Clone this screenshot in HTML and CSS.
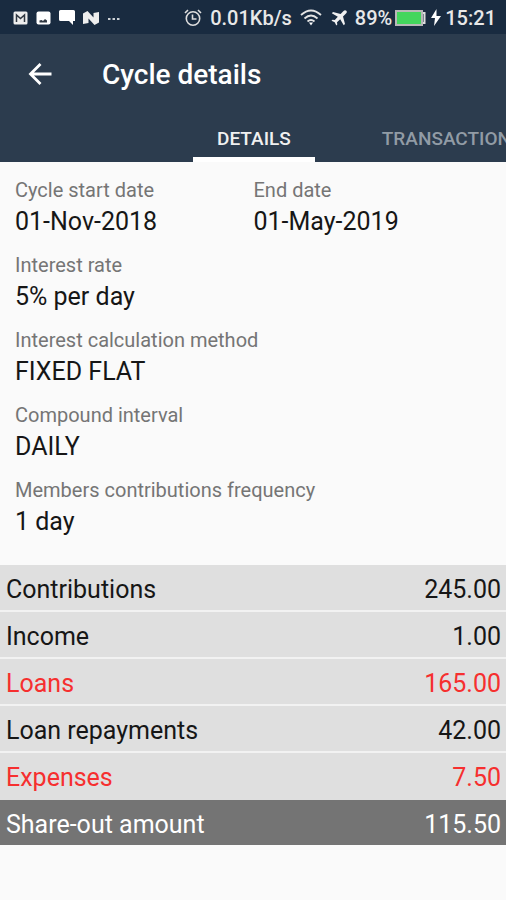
FILE: index.html
```html
<!DOCTYPE html>
<html lang="en">
<head>
<meta charset="utf-8">
<meta name="viewport" content="width=device-width, initial-scale=1">
<title>Cycle details</title>
<link rel="stylesheet" href="styles.css">
</head>
<body>
<div class="status">
  <div class="notices">
    <svg width="15" height="14" viewBox="0 0 15 14" aria-hidden="true"><rect x=".5" y=".5" width="14" height="13" rx="1.5" fill="#eee"/><path d="M3.500 11V4l4 3.500 4-3.500v7" fill="none" stroke="#303842" stroke-width="1.500"/></svg>
    <svg width="15" height="14" viewBox="0 0 15 14" aria-hidden="true"><rect x=".5" y=".5" width="14" height="13" rx="2" fill="#fff"/><path d="M3.500 11.500V9.500l2-.5 1.500 1 2-2 2 1.500v2z" fill="#303842"/></svg>
    <svg width="16" height="15" viewBox="0 0 16 15" aria-hidden="true"><path d="M1.500 0h13Q16 0 16 1.500V11h-2v4l-4-4H1.500Q0 11 0 9.500v-8Q0 0 1.500 0z" fill="#fff"/></svg>
    <svg width="16" height="14" viewBox="0 0 16 14" aria-hidden="true"><path d="M0 2.500L4.500 0l6 6.500V2L16 1v10.500L11.500 14l-6-6.500V12L0 13z" fill="#eee"/></svg>
    <svg width="14" height="14" viewBox="0 0 14 14" aria-hidden="true"><path d="M1 8h2.500M5.500 8H8M10 8h2.500" stroke="#ccd1d6" stroke-width="2"/></svg>
  </div>
  <div class="system">
    <svg class="alarm" width="18" height="18" viewBox="0 0 18 18" fill="none" stroke="#dedede" stroke-width="1.600" aria-hidden="true"><circle cx="9" cy="9.500" r="6.700"/><path d="M8.500 5.500v4.500h4M1 4l3-3M17 4l-3-3"/></svg>
    <span class="rate">0.01Kb/s</span>
    <svg class="wifi" width="22" height="17" viewBox="0 0 22 17" fill="none" stroke="#e4e4e4" stroke-width="1.800" aria-hidden="true"><path d="M1 6q10-9 20 0M4.500 9.500q6.500-6 13 0M7.500 12.500q3.500-3 7 0"/><path d="M9 13.500h4l-2 3z" fill="#fff" stroke="none"/></svg>
    <svg class="plane" width="16" height="16" viewBox="0 0 16 16" aria-hidden="true"><path d="M15.300.7q-1.300-1.200-2.800.3L9.600 4 2 2 .8 3.300l6 3.500-3 3.200-2.300-.3-1 1L3.700 12.300l1.600 3.200 1-1L6 12.200l3.200-3 3.500 6L14 14 12 6.400l3-2.900q1.500-1.500.3-2.800z" fill="#f0f0f0"/></svg>
    <span>89%</span>
    <svg class="battery" width="31" height="16" viewBox="0 0 31 16" aria-hidden="true"><rect x="1" y="1" width="26" height="14" fill="#43d65d" stroke="#b8b8b8" stroke-width="2"/><path d="M28 3h1.500v10H28" fill="none" stroke="#ddd" stroke-width="2"/></svg>
    <svg class="bolt" width="10" height="17" viewBox="0 0 10 17" aria-hidden="true"><path d="M5.500 0L0 9h4l-1 8 7-10H5.500z" fill="#fff"/></svg>
    <span>15:21</span>
  </div>
</div>
<header class="header">
  <div class="bar">
    <button class="back" type="button" aria-label="Back"><svg width="24" height="24" viewBox="0 0 24 24" fill="none" stroke="#fff" stroke-width="2.800" aria-hidden="true"><path d="M23.500 11H2.500M12.500 1L2.500 11l10 10"/></svg></button>
    <h1>Cycle details</h1>
  </div>
  <nav class="tabs">
    <a class="tab active" href="#details" aria-current="page">DETAILS</a>
    <a class="tab" href="#transactions">TRANSACTIONS</a>
  </nav>
</header>
<main id="details">
  <dl class="facts">
    <div><dt>Cycle start date</dt><dd>01-Nov-2018</dd></div>
    <div><dt>End date</dt><dd>01-May-2019</dd></div>
    <div class="wide"><dt>Interest rate</dt><dd>5% per day</dd></div>
    <div class="wide"><dt>Interest calculation method</dt><dd>FIXED FLAT</dd></div>
    <div class="wide"><dt>Compound interval</dt><dd>DAILY</dd></div>
    <div class="wide"><dt>Members contributions frequency</dt><dd>1 day</dd></div>
  </dl>
  <table class="totals">
    <tbody>
      <tr><th scope="row">Contributions</th><td>245.00</td></tr>
      <tr><th scope="row">Income</th><td>1.00</td></tr>
      <tr class="out"><th scope="row">Loans</th><td>165.00</td></tr>
      <tr><th scope="row">Loan repayments</th><td>42.00</td></tr>
      <tr class="out"><th scope="row">Expenses</th><td>7.50</td></tr>
    </tbody>
    <tfoot>
      <tr><th scope="row">Share-out amount</th><td>115.50</td></tr>
    </tfoot>
  </table>
</main>
</body>
</html>
```
FILE: styles.css
```css
* { box-sizing: border-box; }
body {
  margin: 0;
  background: #fafafa;
  color: #161616;
  font-family: Roboto, "Liberation Sans", sans-serif;
  overflow-x: hidden;
}
.status {
  display: flex;
  justify-content: space-between;
  align-items: center;
  height: 34px;
  padding: 1px 10px 0 13px;
  background: #192b40;
  color: #e8e8e8;
  font-size: 20px;
  font-weight: 500;
}
.notices, .system { display: flex; align-items: center; }
.notices { gap: 8px; }
.rate { margin: 0 8px; }
.plane { margin: 0 8px 0 9px; }
.battery { margin: 0 5px 0 3px; }
.bolt { margin-right: 4px; }
.header { background: #2c3c4e; color: #fff; overflow: hidden; }
.bar { display: flex; align-items: center; height: 81px; padding-left: 28px; }
.back {
  display: flex;
  margin: 0 50px 0 0;
  padding: 0;
  border: 0;
  background: none;
}
h1 { margin: 0; font-size: 28px; font-weight: 500; line-height: 32px; }
.tabs { display: flex; gap: 43px; padding-left: 193px; }
.tab {
  padding: 0 24px;
  height: 47px;
  border-bottom: 5px solid transparent;
  color: #919ba5;
  font-size: 19px;
  font-weight: 500;
  line-height: 48px;
  text-decoration: none;
}
.tab.active { color: #f0f0f0; border-color: #fff; }
.facts {
  display: grid;
  grid-template-columns: 1fr 1fr;
  row-gap: 15px;
  margin: 0;
  padding: 16px 14px 27px 15px;
}
.wide { grid-column: 1 / -1; }
dt { color: #757575; font-size: 20px; line-height: 25px; }
dd { margin: 3px 0 0; font-size: 25px; line-height: 32px; }
.totals {
  width: 100%;
  border-collapse: collapse;
  background: #dfdfdf;
  font-size: 25px;
  line-height: 41px;
}
th, td { padding: 4px 5px 0 6px; }
th { font-weight: 400; text-align: left; }
td { text-align: right; }
tbody tr { border-bottom: 2px solid #f2f2f2; }
tbody tr:last-child { border-bottom-color: #dfdfdf; }
.out { color: #f62f2f; }
tfoot { background: #747474; color: #fff; }
```
